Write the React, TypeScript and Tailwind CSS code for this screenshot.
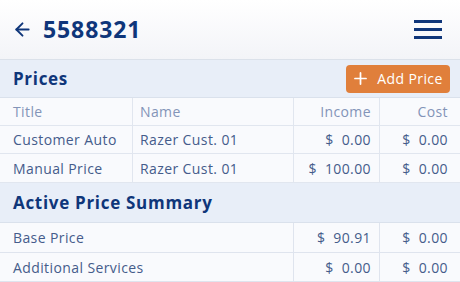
import { ArrowLeft, Plus } from "lucide-react";

const font = { fontFamily: '"Open Sans", "Liberation Sans", sans-serif' };

function Money({ value }: { value: string }) {
  return (
    <span className="inline-flex items-baseline">
      <span>$</span>
      <span className="ml-[8px]">{value}</span>
    </span>
  );
}

const priceRows = [
  { title: "Customer Auto", name: "Razer Cust. 01", income: "0.00", cost: "0.00", h: "h-[28px]" },
  { title: "Manual Price", name: "Razer Cust. 01", income: "100.00", cost: "0.00", h: "h-[29px]" },
];

const summaryRows = [
  { label: "Base Price", income: "90.91", cost: "0.00", h: "h-[30px]" },
  { label: "Additional Services", income: "0.00", cost: "0.00", h: "h-[29px]" },
];

export default function App() {
  return (
    <div className="w-[460px] h-[282px] overflow-hidden bg-[#eaeff8] text-[#455c8b]" style={font}>
      <header className="h-[60px] flex items-center justify-between pl-[12px] pr-[18px] bg-gradient-to-b from-white to-[#f3f4f8] border-b border-[#dbe1ea]">
        <div className="flex items-center gap-[10px] text-[#0f367a]">
          <ArrowLeft size={21} strokeWidth={2.2} />
          <span className="text-[23px] font-bold tracking-[0.9px] leading-none">5588321</span>
        </div>
        <div className="flex flex-col gap-[5px]">
          <span className="block w-[28px] h-[3px] bg-[#0f367a]" />
          <span className="block w-[28px] h-[3px] bg-[#0f367a]" />
          <span className="block w-[28px] h-[3px] bg-[#0f367a]" />
        </div>
      </header>

      <div className="h-[38px] flex items-center justify-between pl-[13px] pr-[10px] bg-[#e8eef8] border-b border-[#dae1ec]">
        <span className="text-[17px] font-bold tracking-[0.7px] text-[#0f367a]">Prices</span>
        <button className="h-[28px] w-[104px] flex items-center justify-center gap-[7px] pr-[2px] rounded-[4px] bg-[#e07f3b] text-white text-[14px] font-medium tracking-[0.4px]">
          <Plus size={19} strokeWidth={2.2} />
          <span>Add Price</span>
        </button>
      </div>

      <div className="grid grid-cols-[133px_161px_86px_80px] text-[14px] font-medium tracking-[0.4px] bg-[#f9fafd]">
        <div className="h-[28px] flex items-center pl-[13px] text-[#8394b8] border-b border-r border-[#e1e6ef]">Title</div>
        <div className="h-[28px] flex items-center pl-[7px] text-[#8394b8] border-b border-r border-[#e1e6ef]">Name</div>
        <div className="h-[28px] flex items-center justify-end pr-[8px] text-[#8394b8] border-b border-r border-[#e1e6ef]">Income</div>
        <div className="h-[28px] flex items-center justify-end pr-[12px] text-[#8394b8] border-b border-[#e1e6ef]">Cost</div>
        {priceRows.map((r) => (
          <div key={r.title} className="contents">
            <div className={`${r.h} flex items-center pl-[13px] border-b border-r border-[#e1e6ef]`}>{r.title}</div>
            <div className={`${r.h} flex items-center pl-[7px] border-b border-r border-[#e1e6ef]`}>{r.name}</div>
            <div className={`${r.h} flex items-center justify-end pr-[8px] border-b border-r border-[#e1e6ef]`}>
              <Money value={r.income} />
            </div>
            <div className={`${r.h} flex items-center justify-end pr-[12px] border-b border-[#e1e6ef]`}>
              <Money value={r.cost} />
            </div>
          </div>
        ))}
      </div>

      <div className="h-[40px] flex items-center pl-[13px] bg-[#e8eef8] border-b border-[#dae1ec]">
        <span className="text-[17px] font-bold tracking-[0.7px] text-[#0f367a]">Active Price Summary</span>
      </div>

      <div className="grid grid-cols-[294px_86px_80px] text-[14px] font-medium tracking-[0.4px] bg-[#f9fafd]">
        {summaryRows.map((r) => (
          <div key={r.label} className="contents">
            <div className={`${r.h} flex items-center pl-[13px] border-b border-r border-[#dfe4ee]`}>{r.label}</div>
            <div className={`${r.h} flex items-center justify-end pr-[8px] border-b border-r border-[#dfe4ee]`}>
              <Money value={r.income} />
            </div>
            <div className={`${r.h} flex items-center justify-end pr-[12px] border-b border-[#dfe4ee]`}>
              <Money value={r.cost} />
            </div>
          </div>
        ))}
      </div>
    </div>
  );
}
